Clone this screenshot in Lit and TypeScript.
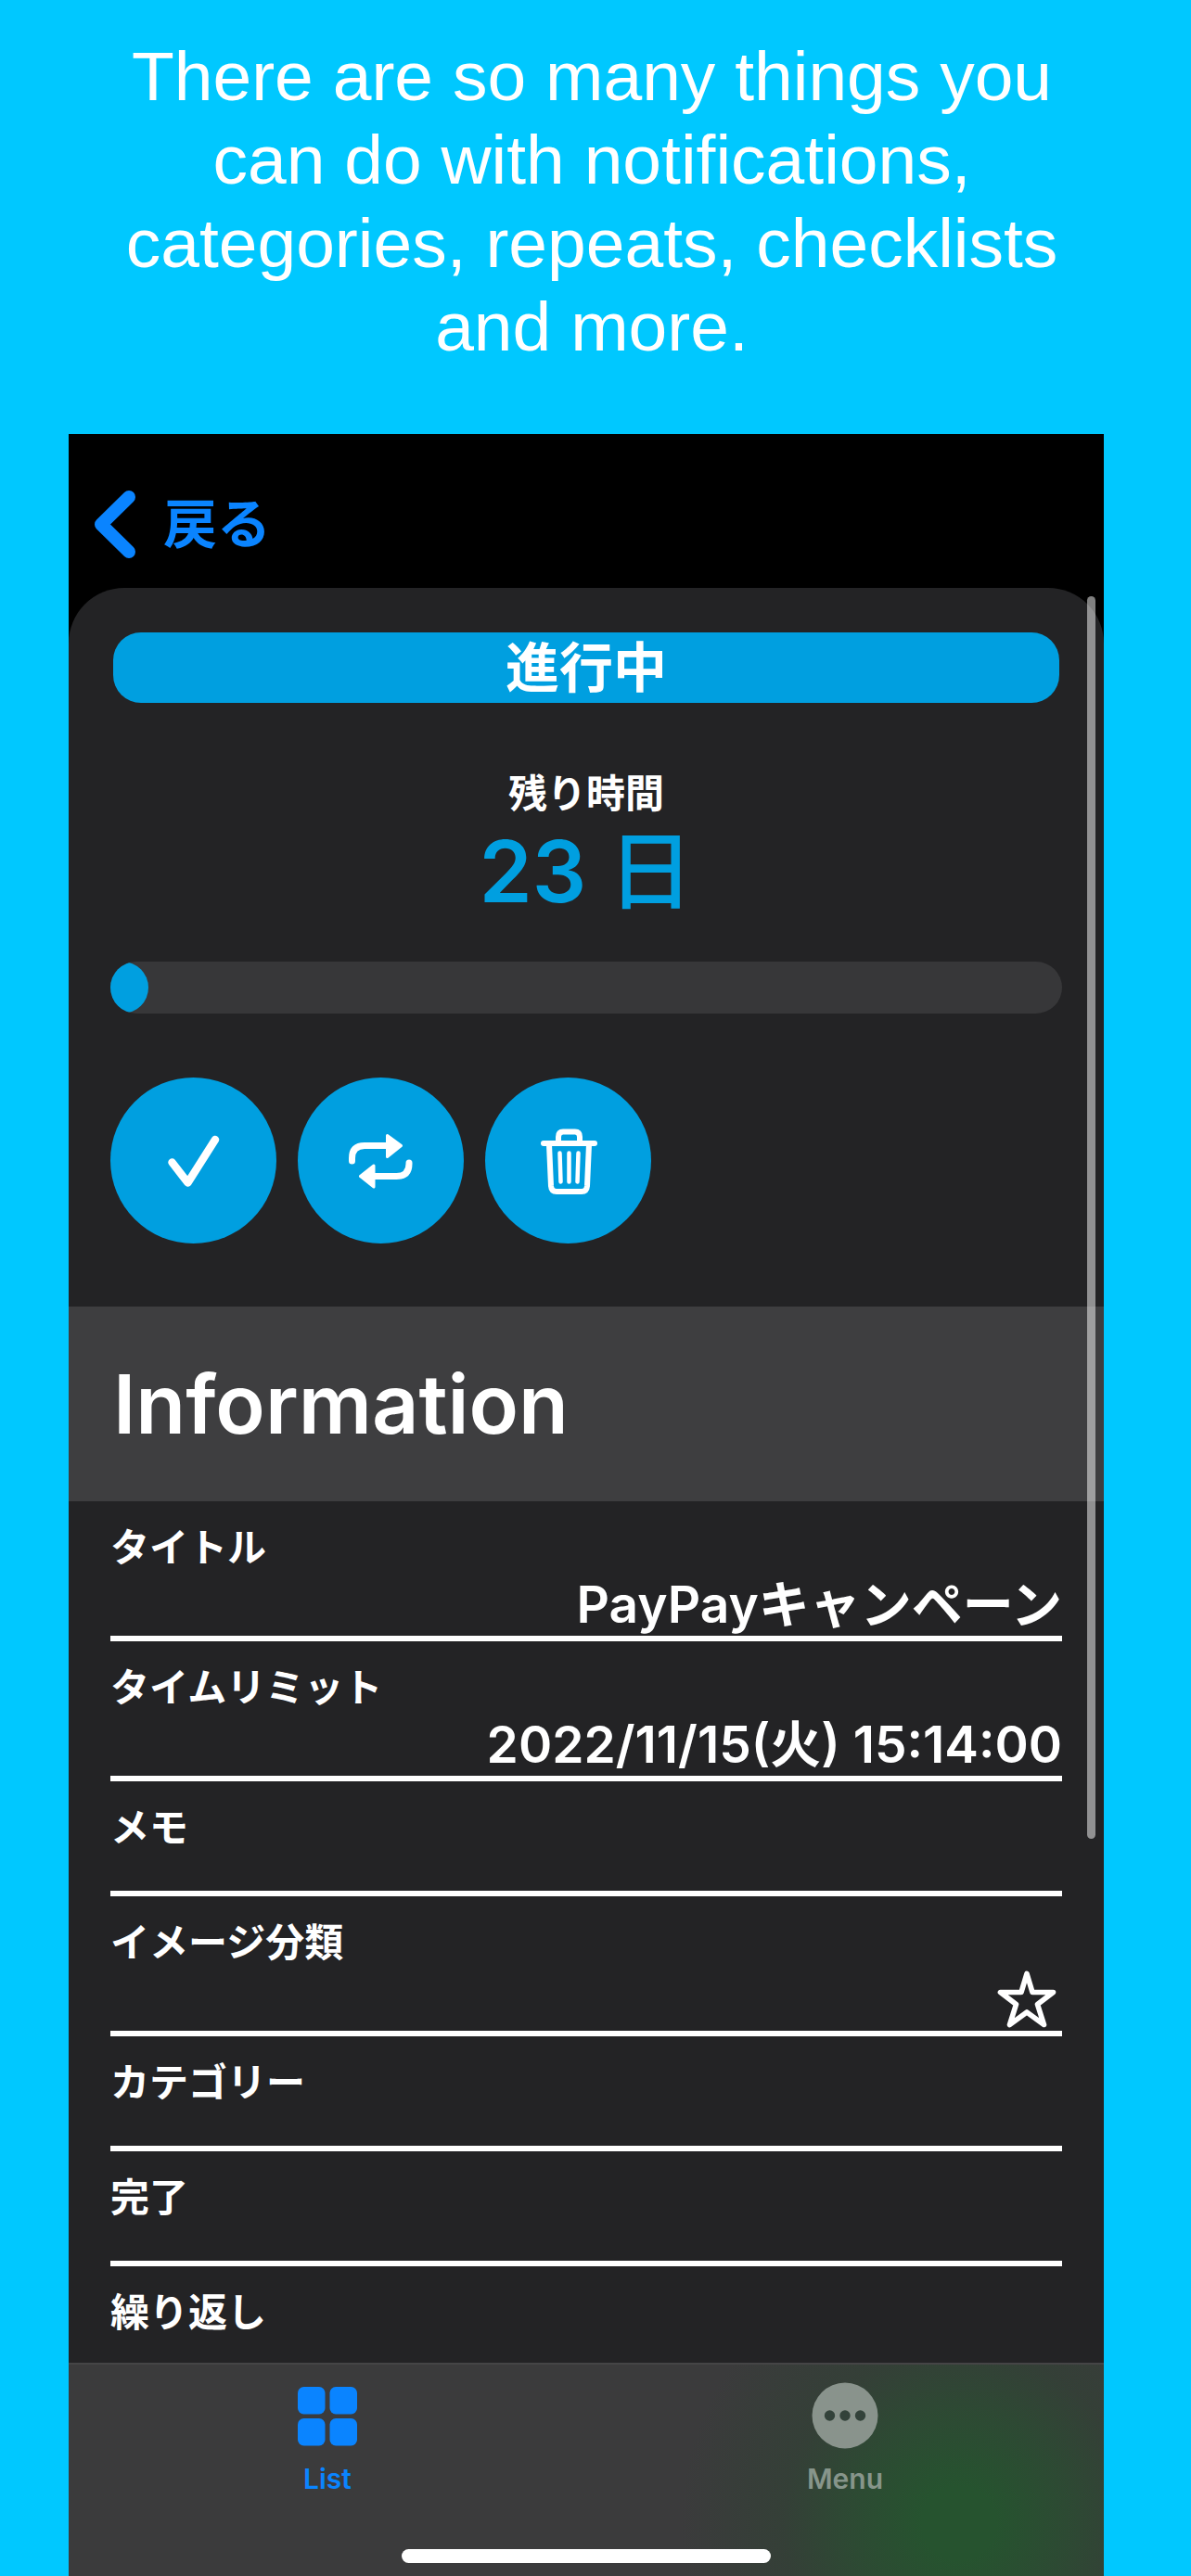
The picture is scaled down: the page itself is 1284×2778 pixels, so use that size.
import { LitElement, html, css, svg, nothing } from "lit";
import type { TemplateResult } from "lit";
import { customElement, property } from "lit/decorators.js";

interface Field {
  label: string;
  value?: string;
  star?: boolean;
}

const FIELDS: Field[] = [
  { label: "タイトル", value: "PayPayキャンペーン" },
  { label: "タイムリミット", value: "2022/11/15(火) 15:14:00" },
  { label: "メモ" },
  { label: "イメージ分類", star: true },
  { label: "カテゴリー" },
  { label: "完了" },
  { label: "繰り返し" },
];

const icons: Record<string, TemplateResult> = {
  check: svg`<path d="M66.500 91.500 83.500 113.500 113 67" fill="none" stroke="currentColor" stroke-width="8.500" stroke-linecap="round" stroke-linejoin="round"/>`,
  repeat: svg`
    <g fill="none" stroke="currentColor" stroke-width="7" stroke-linecap="round">
      <path d="M58.500 90V87Q58.500 73.500 72 73.500H96"/>
      <path d="M120 92V93Q120 106.500 106.500 106.500H83"/>
    </g>
    <g fill="currentColor" stroke="currentColor" stroke-width="3" stroke-linejoin="round">
      <path d="M96.500 62.500 111.500 73.500 96.500 85.500Z"/>
      <path d="M82 95 67.500 106.500 82 118Z"/>
    </g>`,
  trash: svg`
    <g fill="none" stroke="currentColor" stroke-width="6" stroke-linecap="round" stroke-linejoin="round">
      <path d="M63 71H118"/>
      <path d="M79 70V64Q79 58.500 84 58.500H97Q102 58.500 102 64V70"/>
      <path d="M69 72 71 117Q71.500 123 77 123H104Q109.500 123 110 117L112 72"/>
    </g>
    <path d="M80.500 81.500 81.500 112.500M90.500 81.500V112.500M100.500 81.500 99.500 112.500" fill="none" stroke="currentColor" stroke-width="4.500" stroke-linecap="round"/>`,
};

@customElement("action-button")
export class ActionButton extends LitElement {
  @property() icon = "check";
  @property() label = "";

  static styles = css`
    :host {
      display: block;
    }
    .button {
      display: block;
      width: 179px;
      height: 179px;
      padding: 0;
      border: 0;
      border-radius: 50%;
      background: #009fe0;
      color: #fff;
      cursor: pointer;
    }
    .icon {
      display: block;
      width: 100%;
      height: 100%;
    }
  `;

  render() {
    return html`<button class="button" type="button" aria-label=${this.label}>
      <svg class="icon" viewBox="0 0 179 179" aria-hidden="true">${icons[this.icon]}</svg>
    </button>`;
  }
}

@customElement("app-root")
export class AppRoot extends LitElement {
  private readonly progress = 4;

  static styles = css`
    :host {
      display: flex;
      flex-direction: column;
      box-sizing: border-box;
      min-height: 100vh;
      padding: 37px 94px 0 74px;
      background: #00c8ff;
      color: #fff;
      font-family: Inter, "Noto Sans CJK JP", sans-serif;
      font-weight: 600;
    }
    .headline {
      margin: 0;
      padding: 0 0 71px 12px;
      font: 400 75px/90px "Liberation Sans", Arial, sans-serif;
      text-align: center;
    }
    .screen {
      display: flex;
      flex-direction: column;
      flex: 1;
      background: #000;
    }
    .nav {
      display: flex;
      align-items: center;
      height: 166px;
      padding: 28px 26px 0;
      box-sizing: border-box;
    }
    .back {
      display: flex;
      align-items: center;
      gap: 28px;
      padding: 0;
      border: 0;
      background: none;
      color: #0a84ff;
      font: inherit;
      font-size: 58px;
      line-height: 80px;
      cursor: pointer;
    }
    .chevron {
      display: block;
      width: 48px;
      height: 76px;
    }
    .sheet {
      position: relative;
      border-radius: 60px 60px 0 0;
      background: #232325;
    }
    .scrollbar {
      position: absolute;
      top: 9px;
      right: 9px;
      width: 9px;
      height: 70%;
      border-radius: 5px;
      background: rgba(255, 255, 255, 0.5);
    }
    .summary {
      padding: 48px 45px 68px;
    }
    .status {
      margin: 0 3px 72px;
      border-radius: 30px;
      background: #009fe0;
      font-size: 58px;
      line-height: 76px;
      text-align: center;
    }
    .remaining {
      display: flex;
      flex-direction: column;
      align-items: center;
      margin: 0 0 39px;
    }
    .caption {
      font-size: 42px;
      line-height: 52px;
    }
    .time {
      color: #009fe0;
      font-size: 92px;
      line-height: 116px;
    }
    .unit {
      font-weight: 500;
    }
    .track {
      overflow: hidden;
      height: 56px;
      margin-bottom: 69px;
      border-radius: 28px;
      background: #373739;
    }
    .fill {
      height: 100%;
      border-radius: 0 28px 28px 0;
      background: #009fe0;
    }
    .actions {
      display: flex;
      gap: 23px;
    }
    .section {
      margin: 0;
      padding: 0 48px;
      background: #3e3e40;
      font-size: 88px;
      font-weight: 600;
      line-height: 210px;
    }
    .fields {
      margin: 0;
      padding: 0 45px;
    }
    .field {
      padding-top: 20px;
      border-bottom: 6px solid #fff;
    }
    .field:last-child {
      border-bottom: 0;
      height: 84px;
    }
    .label {
      font-size: 42px;
      line-height: 60px;
    }
    .value {
      display: flex;
      align-items: center;
      justify-content: flex-end;
      min-height: 36px;
      margin: 0;
      padding-bottom: 2px;
      font-size: 55px;
      line-height: 63px;
    }
    .star {
      display: block;
      width: 78px;
      height: 63px;
    }
    .tabbar {
      display: flex;
      flex-direction: column;
      justify-content: space-between;
      flex: 1;
      border-top: 2px solid #454546;
      background:
        radial-gradient(circle at 86% 75%, #26532f 0, #26532f 40px, rgba(43, 76, 50, 0.85) 120px, rgba(48, 66, 52, 0.6) 190px, rgba(58, 58, 59, 0) 300px),
        #3b3b3c;
    }
    .tabs {
      display: grid;
      grid-template-columns: 1fr 1fr;
      padding-top: 18px;
    }
    .tab {
      display: flex;
      flex-direction: column;
      align-items: center;
      gap: 13px;
      color: #87958b;
      font-size: 30px;
      line-height: 36px;
      text-decoration: none;
    }
    .tab.active {
      color: #0a84ff;
    }
    .tab-icon {
      display: block;
      width: 74px;
      height: 74px;
    }
    .home {
      align-self: center;
      width: 398px;
      height: 15px;
      margin-bottom: 14px;
      border-radius: 8px;
      background: #fff;
    }
  `;

  private renderField(field: Field) {
    return html`<div class="field">
      <dt class="label">${field.label}</dt>
      <dd class="value">
        ${field.value ?? nothing}
        ${field.star
          ? html`<svg class="star" viewBox="0 0 78 63" role="img" aria-label="星">
              <path
                d="M40 3.500 46 23.500H68.500L51.500 36.500 58.500 58.500 40 45 21.500 58.500 28.500 36.500 11.500 23.500H34Z"
                fill="none" stroke="currentColor" stroke-width="5.700" stroke-linejoin="round"/>
            </svg>`
          : nothing}
      </dd>
    </div>`;
  }

  render() {
    return html`
      <p class="headline">
        There are so many things you can do with notifications, categories, repeats, checklists and more.
      </p>
      <div class="screen">
        <header class="nav">
          <button class="back" type="button">
            <svg class="chevron" viewBox="0 0 48 76" aria-hidden="true">
              <path d="M39 9 9 38.500 39 68" fill="none" stroke="currentColor" stroke-width="14" stroke-linecap="round" stroke-linejoin="round"/>
            </svg>
            <span>戻る</span>
          </button>
        </header>
        <main class="sheet">
          <section class="summary">
            <div class="status">進行中</div>
            <div class="remaining">
              <span class="caption">残り時間</span>
              <span class="time">23 <span class="unit">日</span></span>
            </div>
            <div class="track" role="progressbar" aria-label="残り時間" aria-valuenow=${this.progress} aria-valuemin="0" aria-valuemax="100">
              <div class="fill" style="width: ${this.progress}%"></div>
            </div>
            <div class="actions">
              <action-button icon="check" label="完了"></action-button>
              <action-button icon="repeat" label="繰り返し"></action-button>
              <action-button icon="trash" label="削除"></action-button>
            </div>
          </section>
          <h2 class="section">Information</h2>
          <dl class="fields">${FIELDS.map((f) => this.renderField(f))}</dl>
          <div class="scrollbar"></div>
        </main>
        <footer class="tabbar">
          <nav class="tabs">
            <a class="tab active" href="#list">
              <svg class="tab-icon" viewBox="0 0 74 74" fill="currentColor" aria-hidden="true">
                <rect x="5" y="6" width="29.500" height="29.500" rx="6.500"/>
                <rect x="39.500" y="6" width="29.500" height="29.500" rx="6.500"/>
                <rect x="5" y="40" width="29.500" height="29.500" rx="6.500"/>
                <rect x="39.500" y="40" width="29.500" height="29.500" rx="6.500"/>
              </svg>
              <span>List</span>
            </a>
            <a class="tab" href="#menu">
              <svg class="tab-icon" viewBox="0 0 74 74" aria-hidden="true">
                <circle cx="37" cy="37" r="35.500" fill="#89938c"/>
                <g fill="#33423a">
                  <circle cx="20.500" cy="37" r="5.700"/>
                  <circle cx="37" cy="37" r="5.700"/>
                  <circle cx="53.500" cy="37" r="5.700"/>
                </g>
              </svg>
              <span>Menu</span>
            </a>
          </nav>
          <div class="home"></div>
        </footer>
      </div>
    `;
  }
}
